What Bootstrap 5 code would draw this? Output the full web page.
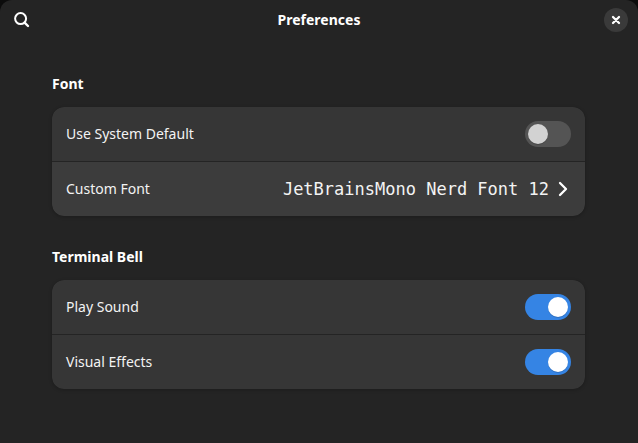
<!DOCTYPE html>
<html lang="en" data-bs-theme="dark">
<head>
<meta charset="utf-8">
<meta name="viewport" content="width=device-width, initial-scale=1">
<title>Preferences</title>
<link href="https://cdn.jsdelivr.net/npm/bootstrap@5.3.0/dist/css/bootstrap.min.css" rel="stylesheet">
<style>
html { background: #0c0c0c; }
body { background: transparent; font-family: "Noto Sans", "Open Sans", sans-serif; font-size: 14px; line-height: 20px; color: #fff; }
.pref-window { background: #242424; border-radius: 12px 12px 0 0; }
.pref-header { height: 40px; padding: 0 10px; }
.pref-title { font-size: 14px; line-height: 20px; font-weight: 700; }
.icon-btn { width: 24px; height: 24px; color: #fff; }
.close-btn { background: #3a3a3a; }
.pref-body { padding: 34px 53px 24px 52px; }
.pref-group + .pref-group { margin-top: 31px; }
.group-title { font-size: 14px; line-height: 20px; font-weight: 700; margin-bottom: 13px; }
.pref-list { --bs-list-group-bg: #363636; --bs-list-group-border-color: #242424; --bs-list-group-color: #f3f3f3; --bs-list-group-action-hover-bg: #3c3c3c; border-radius: 12px; overflow: hidden; box-shadow: 0 1px 3px 1px rgba(0,0,0,.14); }
.pref-row { height: 54px; padding: 0 14px; border: 0; }
.pref-row + .pref-row { height: 55px; border-top: 1px solid #242424; }
.row-active { background: #3c3c3c; }
.font-name { font-family: "DejaVu Sans Mono", monospace; font-size: 17px; }
.form-check-input.pref-switch { width: 46px; height: 26px; margin: 0; border: 0; background-color: #545454; border-radius: 13px;
  --bs-form-switch-bg: url("data:image/svg+xml,%3csvg xmlns='http://www.w3.org/2000/svg' viewBox='0 0 26 26'%3e%3ccircle cx='13' cy='14' r='10' fill='%23000' fill-opacity='.15'/%3e%3ccircle cx='13' cy='13' r='10' fill='%23d2d2d2'/%3e%3c/svg%3e") !important; background-image: var(--bs-form-switch-bg); background-size: 26px 26px; background-position: left center; }
.form-check-input.pref-switch:checked { background-color: #3584e4; background-position: right center;
  --bs-form-switch-bg: url("data:image/svg+xml,%3csvg xmlns='http://www.w3.org/2000/svg' viewBox='0 0 26 26'%3e%3ccircle cx='13' cy='14' r='10' fill='%23000' fill-opacity='.15'/%3e%3ccircle cx='13' cy='13' r='10' fill='%23fff'/%3e%3c/svg%3e") !important; background-image: var(--bs-form-switch-bg); }
</style>
</head>
<body>
<div class="pref-window min-vh-100">
  <header class="pref-header d-flex align-items-center justify-content-between">
    <button type="button" class="icon-btn btn p-0 border-0 d-flex align-items-center justify-content-center" aria-label="Search">
      <svg width="16" height="16" viewBox="0 0 16 16" fill="none" stroke="currentColor" stroke-width="2"><circle cx="6.6" cy="6.6" r="5.5"/><path d="M10.6 10.6L14 14" stroke-width="2.4" stroke-linecap="round"/></svg>
    </button>
    <h1 class="pref-title mb-0">Preferences</h1>
    <button type="button" class="icon-btn close-btn btn p-0 border-0 rounded-circle d-flex align-items-center justify-content-center" aria-label="Close">
      <svg width="16" height="16" viewBox="0 0 16 16" fill="none" stroke="currentColor" stroke-width="2.3" stroke-linecap="round"><path d="M5 5l6 6M11 5l-6 6"/></svg>
    </button>
  </header>
  <main class="pref-body">
    <section class="pref-group">
      <h2 class="group-title">Font</h2>
      <div class="pref-list list-group">
        <div class="pref-row list-group-item d-flex align-items-center justify-content-between">
          <label for="sysDefault">Use System Default</label>
          <div class="form-switch p-0 d-flex"><input class="form-check-input pref-switch" type="checkbox" role="switch" id="sysDefault"></div>
        </div>
        <button type="button" class="pref-row row-active list-group-item list-group-item-action d-flex align-items-center justify-content-between">
          <span>Custom Font</span>
          <span class="d-flex align-items-center gap-1"><span class="font-name">JetBrainsMono Nerd Font 12</span>
          <svg width="18" height="16" viewBox="0 0 18 16" fill="none" stroke="#fff" stroke-width="2.3" stroke-linecap="round" stroke-linejoin="round"><path d="M7 2l6 6-6 6"/></svg></span>
        </button>
      </div>
    </section>
    <section class="pref-group">
      <h2 class="group-title">Terminal Bell</h2>
      <div class="pref-list list-group">
        <div class="pref-row list-group-item d-flex align-items-center justify-content-between">
          <label for="playSound">Play Sound</label>
          <div class="form-switch p-0 d-flex"><input class="form-check-input pref-switch" type="checkbox" role="switch" id="playSound" checked></div>
        </div>
        <div class="pref-row list-group-item d-flex align-items-center justify-content-between">
          <label for="visualFx">Visual Effects</label>
          <div class="form-switch p-0 d-flex"><input class="form-check-input pref-switch" type="checkbox" role="switch" id="visualFx" checked></div>
        </div>
      </div>
    </section>
  </main>
</div>
<script src="https://cdn.jsdelivr.net/npm/bootstrap@5.3.0/dist/js/bootstrap.bundle.min.js"></script>
</body>
</html>
